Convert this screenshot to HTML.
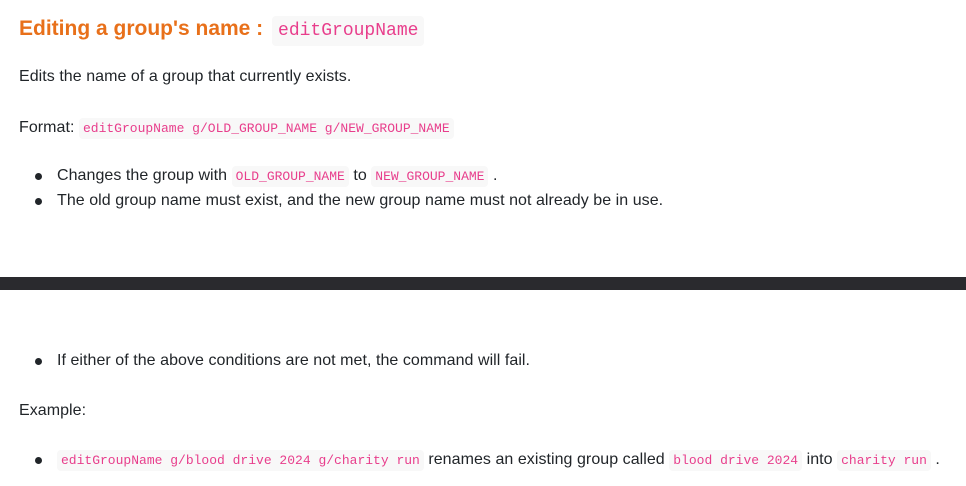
<!DOCTYPE html>
<html><head><meta charset="utf-8"><style>
html,body{margin:0;padding:0;background:#fff;width:966px;height:486px;overflow:hidden}
body{font-family:"Liberation Sans","DejaVu Sans",sans-serif;font-size:16px;letter-spacing:0.05px;color:#212529}
.l{position:absolute;left:19px;white-space:nowrap;line-height:20px}
code{font-family:"Liberation Mono","DejaVu Sans Mono",monospace;font-size:13px;letter-spacing:0;color:#e83e8c;background:#f8f8f8;padding:3px 4px;border-radius:4px}
h2{position:absolute;left:19px;top:13px;margin:0;font-size:21px;letter-spacing:0;color:#e8701a;font-weight:bold;line-height:32px;white-space:nowrap}
h2 code{font-size:18px;padding:5px 6px;font-weight:normal;margin-left:3px}
.b{left:57px}
.b::before{content:"";position:absolute;left:-22px;top:7px;width:7px;height:7px;border-radius:50%;background:#212529}
.bar{position:absolute;left:0;top:277px;width:966px;height:13px;background:#2a2a2e}
</style></head><body>
<h2>Editing a group's name : <code>editGroupName</code></h2>
<div class="l" style="top:67px">Edits the name of a group that currently exists.</div>
<div class="l" style="top:118px">Format: <code>editGroupName g/OLD_GROUP_NAME g/NEW_GROUP_NAME</code></div>
<div class="l b" style="top:166px">Changes the group with <code>OLD_GROUP_NAME</code> to <code>NEW_GROUP_NAME</code> .</div>
<div class="l b" style="top:191px">The old group name must exist, and the new group name must not already be in use.</div>
<div class="bar"></div>
<div class="l b" style="top:351px">If either of the above conditions are not met, the command will fail.</div>
<div class="l" style="top:401px">Example:</div>
<div class="l b" style="top:450px"><code>editGroupName g/blood drive 2024 g/charity run</code> renames an existing group called <code>blood drive 2024</code> into <code>charity run</code> .</div>
</body></html>
